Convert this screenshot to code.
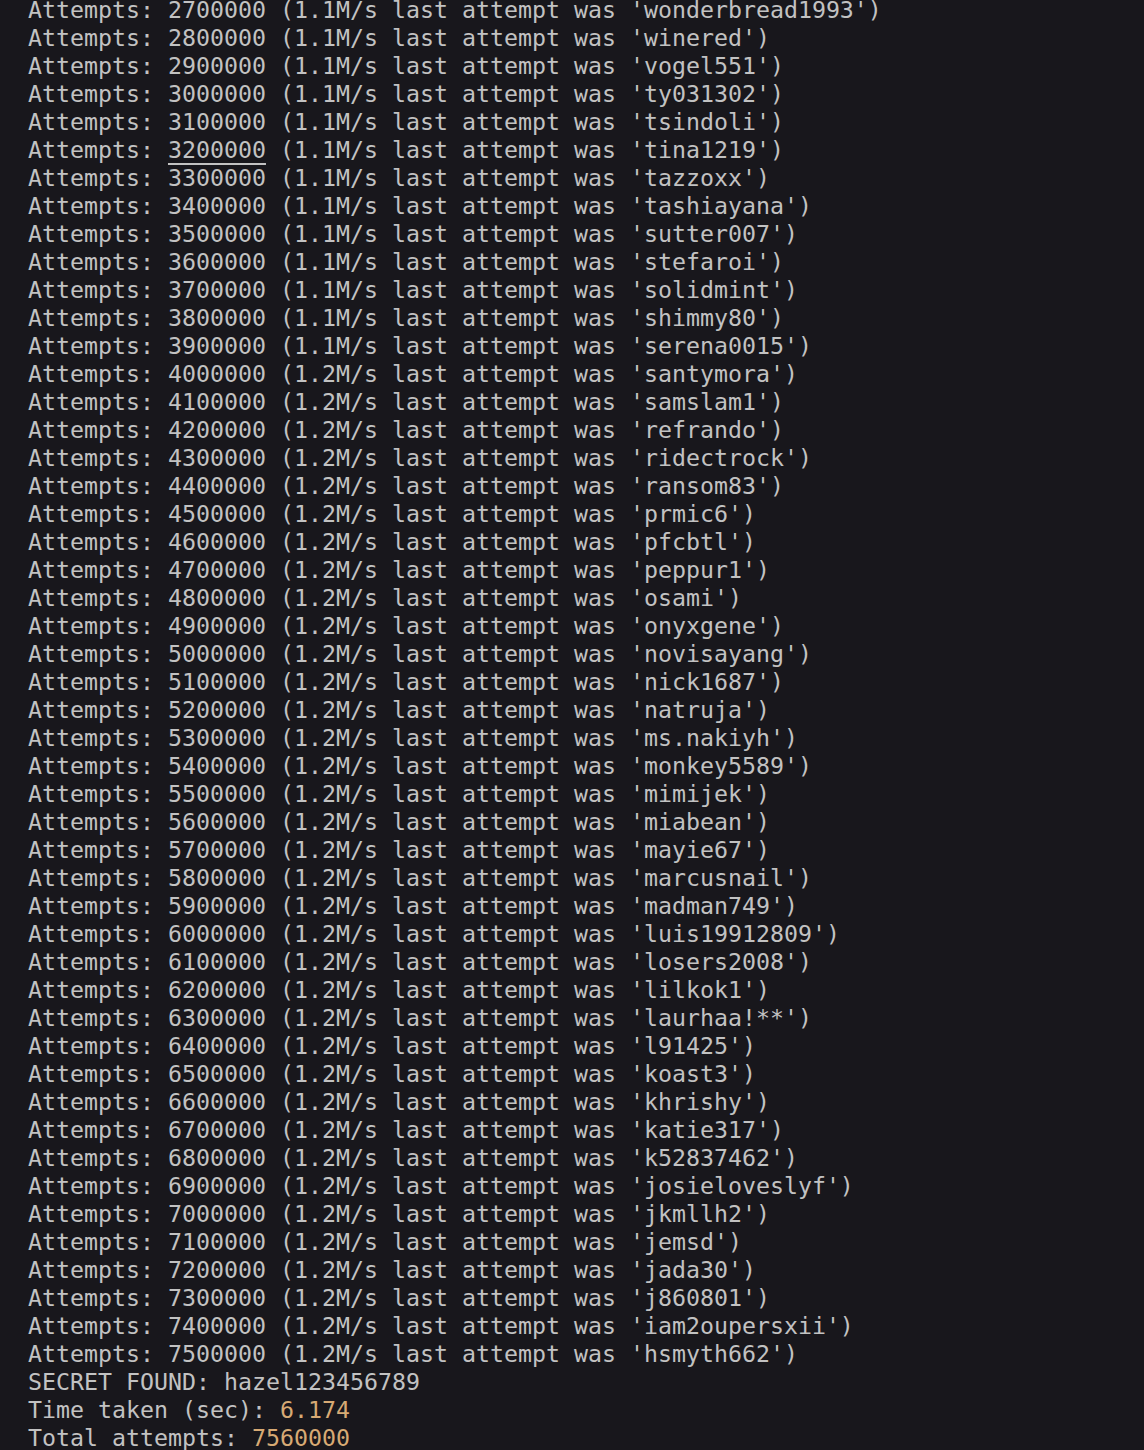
const rows = [
  ['2700000', '1.1', 'wonderbread1993'],
  ['2800000', '1.1', 'winered'],
  ['2900000', '1.1', 'vogel551'],
  ['3000000', '1.1', 'ty031302'],
  ['3100000', '1.1', 'tsindoli'],
  ['3200000', '1.1', 'tina1219'],
  ['3300000', '1.1', 'tazzoxx'],
  ['3400000', '1.1', 'tashiayana'],
  ['3500000', '1.1', 'sutter007'],
  ['3600000', '1.1', 'stefaroi'],
  ['3700000', '1.1', 'solidmint'],
  ['3800000', '1.1', 'shimmy80'],
  ['3900000', '1.1', 'serena0015'],
  ['4000000', '1.2', 'santymora'],
  ['4100000', '1.2', 'samslam1'],
  ['4200000', '1.2', 'refrando'],
  ['4300000', '1.2', 'ridectrock'],
  ['4400000', '1.2', 'ransom83'],
  ['4500000', '1.2', 'prmic6'],
  ['4600000', '1.2', 'pfcbtl'],
  ['4700000', '1.2', 'peppur1'],
  ['4800000', '1.2', 'osami'],
  ['4900000', '1.2', 'onyxgene'],
  ['5000000', '1.2', 'novisayang'],
  ['5100000', '1.2', 'nick1687'],
  ['5200000', '1.2', 'natruja'],
  ['5300000', '1.2', 'ms.nakiyh'],
  ['5400000', '1.2', 'monkey5589'],
  ['5500000', '1.2', 'mimijek'],
  ['5600000', '1.2', 'miabean'],
  ['5700000', '1.2', 'mayie67'],
  ['5800000', '1.2', 'marcusnail'],
  ['5900000', '1.2', 'madman749'],
  ['6000000', '1.2', 'luis19912809'],
  ['6100000', '1.2', 'losers2008'],
  ['6200000', '1.2', 'lilkok1'],
  ['6300000', '1.2', 'laurhaa!**'],
  ['6400000', '1.2', 'l91425'],
  ['6500000', '1.2', 'koast3'],
  ['6600000', '1.2', 'khrishy'],
  ['6700000', '1.2', 'katie317'],
  ['6800000', '1.2', 'k52837462'],
  ['6900000', '1.2', 'josieloveslyf'],
  ['7000000', '1.2', 'jkmllh2'],
  ['7100000', '1.2', 'jemsd'],
  ['7200000', '1.2', 'jada30'],
  ['7300000', '1.2', 'j860801'],
  ['7400000', '1.2', 'iam2oupersxii'],
  ['7500000', '1.2', 'hsmyth662'],
];

export default function App() {
  return (
    <div className="min-h-[1450px] w-full overflow-hidden bg-[#18171c] text-[#c2c2c2]">
      <div className="-mt-[4px] pl-[28px] font-['DejaVu_Sans_Mono','Liberation_Mono',monospace] text-[23.25px] leading-[28px] whitespace-pre">
        {rows.map(([n, rate, word]) => (
          <div key={n}>
            {'Attempts: '}
            {n === '3200000' ? (
              <span className="underline decoration-2 underline-offset-[5px]">{n}</span>
            ) : (
              n
            )}
            {` (${rate}M/s last attempt was '${word}')`}
          </div>
        ))}
        <div>SECRET FOUND: hazel123456789</div>
        <div>
          Time taken (sec): <span className="text-[#d7aa74]">6.174</span>
        </div>
        <div>
          Total attempts: <span className="text-[#d7aa74]">7560000</span>
        </div>
      </div>
    </div>
  );
}
